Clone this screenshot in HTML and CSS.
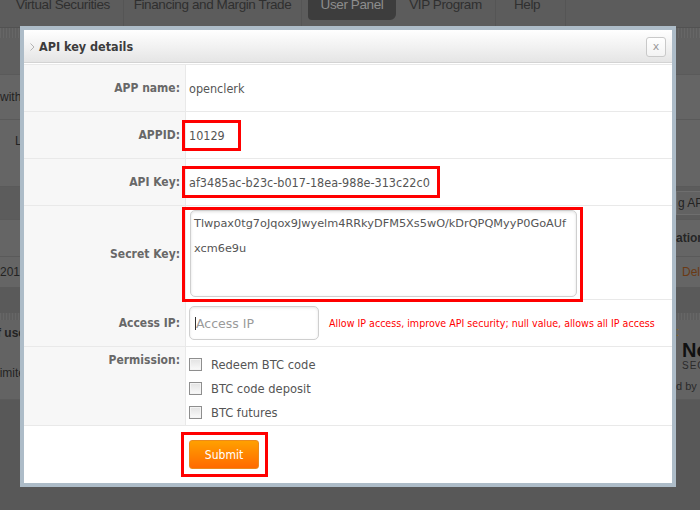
FILE: index.html
```html
<!DOCTYPE html>
<html>
<head>
<meta charset="utf-8">
<title>API key details</title>
<link rel="stylesheet" href="styles.css">
</head>
<body>
<div class="page">
  <nav class="tabs">
    <span class="tab t1">Virtual Securities</span>
    <span class="tab t2">Financing and Margin Trade</span>
    <span class="tab t3 active">User Panel</span>
    <span class="tab t4">VIP Program</span>
    <span class="tab t5">Help</span>
  </nav>
  <div class="strip"></div>
  <div class="bg-row ra"></div>
  <div class="bg-row rb"><span class="lt">with</span></div>
  <div class="bg-row rc"><span class="lt lt-l">L</span></div>
  <div class="bg-row rd"><span class="rt ghost">g API</span></div>
  <div class="bg-row re"><span class="rt head">ation</span></div>
  <div class="bg-row rf"><span class="lt">2013</span><span class="rt del">Del</span></div>
  <div class="gap"></div>
  <div class="strip strip2"></div>
  <div class="bg-box">
    <div class="bx-left">
      <span class="bx-bold">f users</span>
      <span class="bx-small">limited</span>
    </div>
    <div class="bx-right">
      <span class="dot">:</span>
      <span class="norton">No</span>
      <span class="sec">SEC</span>
      <span class="by">d by</span>
    </div>
  </div>
</div>

<div class="modal">
  <div class="modal-head">
    <svg class="head-icon" viewBox="0 0 5 8" width="5" height="8"><path d="M0.5 0.5 L4 4 L0.5 7.5" fill="none" stroke="#b4b4b4" stroke-width="1"/></svg>
    <h3 class="modal-title">API key details</h3>
    <button class="close" type="button">x</button>
  </div>
  <div class="form">
    <div class="row">
      <div class="label">APP name:</div>
      <div class="value">openclerk</div>
    </div>
    <div class="row">
      <div class="label">APPID:</div>
      <div class="value"><span class="mark mark-id">10129</span></div>
    </div>
    <div class="row">
      <div class="label">API Key:</div>
      <div class="value"><span class="mark mark-key">af3485ac-b23c-b017-18ea-988e-313c22c0</span></div>
    </div>
    <div class="row row-secret">
      <div class="label">Secret Key:</div>
      <div class="value value-top">
        <span class="mark mark-secret"><textarea class="secret" readonly>Tlwpax0tg7oJqox9Jwyelm4RRkyDFM5Xs5wO/kDrQPQMyyP0GoAUfxcm6e9u</textarea></span>
      </div>
    </div>
    <div class="row">
      <div class="label">Access IP:</div>
      <div class="value">
        <span class="ip-field"><input class="ip" type="text" placeholder="Access IP"></span>
        <span class="note">Allow IP access, improve API security; null value, allows all IP access</span>
      </div>
    </div>
    <div class="row row-perm">
      <div class="label label-top">Permission:</div>
      <div class="value value-top">
        <div class="checks">
          <label class="check"><input type="checkbox"><span>Redeem BTC code</span></label>
          <label class="check"><input type="checkbox"><span>BTC code deposit</span></label>
          <label class="check"><input type="checkbox"><span>BTC futures</span></label>
        </div>
      </div>
    </div>
    <div class="row row-submit">
      <div class="label label-empty"></div>
      <div class="value value-top">
        <span class="mark mark-submit"><button class="btn" type="button">Submit</button></span>
      </div>
    </div>
  </div>
</div>
</body>
</html>
```

FILE: styles.css
```css
* { box-sizing: border-box; }
html, body { margin: 0; padding: 0; }
body {
  width: 700px;
  height: 510px;
  overflow: hidden;
  position: relative;
  background: #585858;
  font-family: "DejaVu Sans Condensed", "DejaVu Sans", sans-serif;
}

/* ---------- background page (dimmed) ---------- */
.page {
  font-family: "Liberation Sans", Arial, sans-serif;
  color: #232323;
}
.tabs {
  display: flex;
  height: 28px;
  padding-left: 3px;
  background: #5c5c5c;
  border-bottom: 1px solid #525252;
}
.tab {
  height: 27px;
  font-size: 13.5px;
  letter-spacing: -0.4px;
  line-height: 10px;
  text-align: center;
  white-space: nowrap;
  color: #2f2f2f;
  border-right: 1px solid #555;
}
.t1 { width: 121px; }
.t2 { width: 178px; }
.t3 { width: 88px; margin-left: 6px; }
.t4 { width: 100px; }
.t5 { width: 70px; text-align: left; padding-left: 18px; }
.tab.active {
  height: 20px;
  background: #3d3d3d;
  color: #8d8d8d;
  border-right: 0;
  border-radius: 0 0 6px 4px;
}
.strip {
  height: 10px;
  background: repeating-linear-gradient(90deg, #666 0 1px, #5e5e5e 1px 3px);
}
.strip2 { height: 7px; }
.bg-row {
  display: flex;
  justify-content: space-between;
  font-size: 12px;
  background: #656565;
  border-bottom: 1px solid #5a5a5a;
}
.ra { height: 37px; background: #5f5f5f; }
.rb { height: 45px; align-items: center; }
.rc { height: 67px; align-items: flex-start; }
.rd { height: 33px; background: #5c5c5c; align-items: center; }
.re { height: 37px; align-items: center; }
.rf { height: 31px; align-items: center; }
.lt { white-space: nowrap; }
.lt-l { margin-left: 15px; margin-top: 14px; }
.rt {
  margin-left: auto;
  width: 24px;
  overflow: hidden;
  white-space: nowrap;
}
.ghost {
  height: 24px;
  line-height: 22px;
  border: 1px solid #6e6e6e;
  border-right: 0;
  background: #626262;
  padding-left: 1px;
}
.head { font-weight: bold; color: #262626; }
.del { color: #6b3a14; padding-left: 6px; }
.gap { height: 25px; background: #5a5a5a; }
.bg-box {
  height: 80px;
  display: flex;
  justify-content: space-between;
  background: #636363;
  border-bottom: 1px solid #5b5b5b;
}
.bx-left, .bx-right {
  display: flex;
  flex-direction: column;
  width: 24px;
  overflow: hidden;
  white-space: nowrap;
}
.bx-left { padding-top: 6px; margin-left: -3px; width: 26px; }
.bx-bold { font-weight: bold; font-size: 12px; height: 40px; }
.bx-small { font-size: 12px; }
.bx-right { padding-top: 6px; }
.dot { color: #8a6a1e; font-size: 12px; line-height: 12px; height: 14px; }
.norton { font-weight: bold; font-size: 20px; line-height: 20px; color: #111; padding-left: 6px; }
.sec { font-size: 10px; letter-spacing: 1px; color: #2a2a2a; padding-left: 6px; height: 20px; }
.by { font-size: 11px; color: #2a2a2a; }

/* ---------- modal ---------- */
.modal {
  position: absolute;
  left: 20px;
  top: 26px;
  width: 656px;
  height: 461px;
  border: 4px solid #adbcc8;
  background: #fff;
  color: #555;
}
.modal-head {
  height: 33px;
  display: flex;
  align-items: center;
  padding: 1px 6px 0;
  background: linear-gradient(#ffffff, #e5e5e5);
  border-bottom: 1px solid #d3d3d3;
}
.head-icon { margin-right: 4px; flex: none; }
.modal-title {
  flex: 1;
  margin: 0;
  font-size: 12.5px;
  font-weight: bold;
  color: #3c3c3c;
}
.close {
  width: 20px;
  height: 20px;
  padding: 0;
  border: 1px solid #c9c9c9;
  border-radius: 3px;
  background: linear-gradient(#ffffff, #f3f3f3);
  color: #9a9a9a;
  font: 11px/16px "DejaVu Sans", sans-serif;
  text-align: center;
}
.form {
  margin-top: 1px;
  border-top: 1px solid #e9e9e9;
}
.row {
  display: grid;
  grid-template-columns: 162px 1fr;
  height: 47px;
  border-bottom: 1px solid #e9e9e9;
}
.row-secret { height: 94px; }
.row-perm { height: 79px; }
.row-submit { height: 57px; border-bottom: 0; }
.label {
  display: flex;
  align-items: center;
  justify-content: flex-end;
  padding-right: 5px;
  background: #f7f7f7;
  border-right: 1px solid #e9e9e9;
  font-size: 12px;
  font-weight: bold;
  color: #686868;
}
.label-top { align-items: flex-start; padding-top: 6px; }
.label-empty { background: transparent; border-right-color: transparent; }
.value {
  display: flex;
  align-items: center;
  padding-left: 3px;
  font-size: 12.5px;
  color: #555;
}
.value-top { align-items: flex-start; }

/* red annotation boxes */
.mark {
  position: relative;
  display: inline-flex;
  align-items: center;
  margin-left: -7px;
  padding-left: 4px;
  border: 3px solid #ff0000;
}
.mark-id { height: 31px; padding-right: 13px; }
.mark-key { height: 32px; padding-right: 7px; }
.mark-secret { margin-top: 1px; padding: 0 3px 2px 5px; }
.mark-submit { margin-top: 6px; margin-left: -8px; padding: 5px 6px 5px 5px; }

.secret {
  display: block;
  width: 387px;
  height: 87px;
  margin: 0;
  padding: 0 5px 0 3px;
  border: 1px solid #cfcfcf;
  border-radius: 5px;
  box-shadow: inset 0 1px 3px rgba(0, 0, 0, 0.12);
  font: 11.3px/25px "DejaVu Sans", sans-serif;
  color: #555;
  resize: none;
  overflow: hidden;
  word-break: break-all;
}
.ip-field { position: relative; display: block; }
.ip-field::after {
  content: "";
  position: absolute;
  left: 6px;
  top: 11px;
  width: 1px;
  height: 13px;
  background: #333;
}
.ip {
  display: block;
  width: 130px;
  height: 34px;
  margin: 0;
  padding: 0 0 0 6px;
  border: 1px solid #cfcfcf;
  border-radius: 5px;
  box-shadow: inset 0 1px 3px rgba(0, 0, 0, 0.1);
  font: 12.5px "DejaVu Sans", sans-serif;
  color: #555;
}
.ip::placeholder { color: #9a9a9a; }
.note {
  margin-left: 10px;
  font-size: 10.6px;
  color: #ff0000;
  white-space: nowrap;
}
.checks {
  display: flex;
  flex-direction: column;
  padding-top: 5px;
}
.check {
  display: flex;
  align-items: center;
  gap: 9px;
  height: 24px;
  font-size: 12.8px;
  color: #555;
}
.check input {
  -webkit-appearance: none;
  appearance: none;
  width: 13px;
  height: 13px;
  margin: 0;
  border: 1px solid #8e8e8e;
  background: linear-gradient(#e2e2e2, #fafafa);
  box-shadow: inset 0 0 0 1px #f4f4f4;
}
.btn {
  display: block;
  width: 70px;
  height: 29px;
  padding: 0;
  border: 1px solid #ec8a1c;
  border-radius: 3px;
  background: linear-gradient(#ffa000, #ff6a00);
  color: #fff;
  font: 12px "DejaVu Sans Condensed", "DejaVu Sans", sans-serif;
  text-align: center;
}
```
